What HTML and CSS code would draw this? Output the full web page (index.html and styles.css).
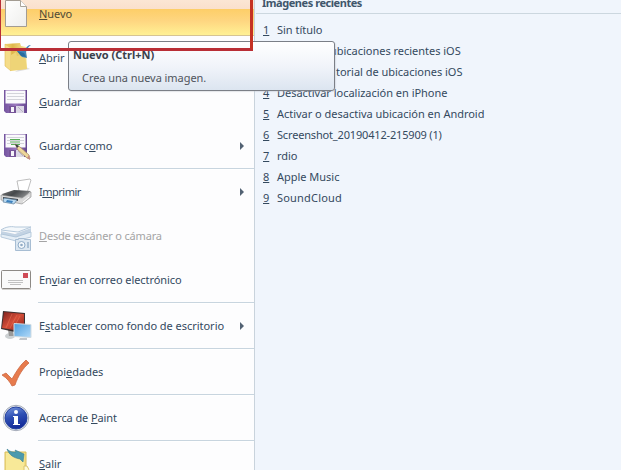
FILE: index.html
```html
<!DOCTYPE html>
<html lang="es">
<head>
<meta charset="utf-8">
<title>Paint</title>
<link rel="stylesheet" href="styles.css">
</head>
<body>
<div class="app">
<nav class="menu">
  <div class="item active">
    <svg class="icon" viewBox="0 0 32 44"><defs><linearGradient id="paper" x2="1" y2="1"><stop stop-color="#fff"/><stop offset="1" stop-color="#eeeeec"/></linearGradient></defs><path d="M5.500 8.500h15l6 6v20h-21z" fill="url(#paper)" stroke="#a39c92"/><path d="M20.500 8.500v6h6" fill="#fff" stroke="#aaa49a"/></svg>
    <span class="label"><u>N</u>uevo</span>
  </div>
  <div class="item">
    <svg class="icon" viewBox="0 0 32 44"><defs><linearGradient id="folder"><stop stop-color="#f3d777"/><stop offset=".35" stop-color="#dfb74b"/><stop offset="1" stop-color="#f8e69b"/></linearGradient></defs><path d="M24 30l6 3-15 3z" fill="#ddd"/><path d="M5 8l15-1 1 3 5 1 1 22-13 1-6-2z" fill="url(#folder)"/><path d="M5 8l6 4v23l-6-5z" fill="#f5dc88" stroke="#dfbd56" stroke-width=".6"/><path d="M11 19l5-3 1 4 8-1 2 14-16 2z" fill="#eed477"/><path d="M31 9c-3 0-5 2-6 5l-8 1 5 6 5 1-1-6c1-3 2-5 5-7z" fill="#4386b9"/><path d="M17 15l7 2 2 4-5-1z" fill="#286c9e"/></svg>
    <span class="label"><u>A</u>brir</span>
  </div>
  <div class="item">
    <svg class="icon" viewBox="0 0 32 44"><defs><linearGradient id="disk" x2="1"><stop stop-color="#74549f"/><stop offset=".5" stop-color="#9a78bd"/><stop offset="1" stop-color="#654790"/></linearGradient></defs><g id="floppy"><path d="M4 10h23v23h-21l-2-2z" fill="url(#disk)"/><path d="M5.500 10.500h20v13h-20z" fill="#fafafc"/><path d="M7 13.500h17m-17 3h17m-17 3h17" stroke="#d3d4da"/><path d="M9 26h15v7h-15z" fill="#dcd8e5"/><path d="M9 26h7v7h-7z" fill="#765498"/><path d="M11 27h3v5h-3z" fill="#f6f5fa"/><path d="M18 27l5 5" stroke="#b9b4c2"/></g></svg>
    <span class="label"><u>G</u>uardar</span>
  </div>
  <div class="item">
    <svg class="icon" viewBox="0 0 32 44"><use href="#floppy"/><path d="M10 15.500h10m-10 2.500h10m-9 2.500h9" stroke="#58ad58"/><path d="M15 20l3 6 9 8 3 1-1-4-9-8z" fill="#eed79a" stroke="#a58861" stroke-width=".7"/><path d="M15 20l2 4 2-2z" fill="#303741"/><path d="M27 34l3 2-1-5z" fill="#c88a84"/></svg>
    <span class="label save-as">Guardar c<u>o</u>mo</span><i class="arrow"></i>
  </div>
  <hr>
  <div class="item">
    <svg class="icon" viewBox="0 0 32 44"><defs><linearGradient id="printer" x2="1" y2=".4"><stop stop-color="#777"/><stop offset=".5" stop-color="#45484b"/><stop offset="1" stop-color="#8a8c8d"/></linearGradient></defs><path d="M17 11l13-2 1 1-4 13-8-2z" fill="#fff" stroke="#b5b5b5" stroke-width=".9"/><path d="M2 24l12-4 17 1-8 7-20-2z" fill="url(#printer)"/><path d="M1 25l21 3 9-6v5l-9 7-21-4z" fill="#dadada" stroke="#888" stroke-width=".6"/><path d="M3 27l15 2v2l-15-2z" fill="#404448"/><path d="M4 28l13 2-3 4-11-2z" fill="#b9d9f1" stroke="#597b98" stroke-width=".7"/><path d="M7 30l6 1-1 2-6-1z" fill="#3b80bd"/><path d="M23 32l6-5" stroke="#fff"/></svg>
    <span class="label print">I<u>m</u>primir</span><i class="arrow"></i>
  </div>
  <div class="item disabled">
    <svg class="icon" viewBox="0 0 32 44"><path d="M1 17l14 3 16-6v4l-15 7-15-4z" fill="#c3d3e3"/><path d="M1 16c4-3 10-4 14-3h16l-13 5z" fill="#f4f8fb" stroke="#b4c8db"/><path d="M1 20l15 3 15-5v5l-15 4-15-4z" fill="#e5eef6" stroke="#a9c0d5" stroke-width=".8"/><path d="M15.500 25.500h3v-1h6v1h6v11h-15z" fill="#dce7f1" stroke="#a7bdd3"/><circle cx="21.500" cy="31" r="3.500" fill="#f4f8fb" stroke="#8fabc7"/><circle cx="21.500" cy="31" r="1.300" fill="#91abc5"/><path d="M28 28v6" stroke="#a9bfd4" stroke-width="2"/></svg>
    <span class="label scan"><u>D</u>esde escáner o cámara</span>
  </div>
  <div class="item">
    <svg class="icon" viewBox="0 0 32 44"><rect x="1.500" y="12.500" width="29" height="18" rx="1" fill="#fafafa" stroke="#8d8985"/><path d="M2 31.500h29" stroke="#d4d2cf"/><path d="M8 22.500h15m-15 2h15m-13 2h11" stroke="#b3b3b3" stroke-width=".8"/><rect x="23" y="15" width="5" height="5" fill="#cf4a56"/></svg>
    <span class="label mail">En<u>v</u>iar en correo electrónico</span>
  </div>
  <hr>
  <div class="item">
    <svg class="icon" viewBox="0 0 32 44"><defs><linearGradient id="redscreen" x2="1" y2="1"><stop stop-color="#7c201c"/><stop offset=".5" stop-color="#d44d38"/><stop offset="1" stop-color="#8b211c"/></linearGradient><linearGradient id="bluescreen" x2="1" y2="1"><stop stop-color="#4b9ddd"/><stop offset="1" stop-color="#b1dafa"/></linearGradient></defs><ellipse cx="10" cy="32" rx="5" ry="3" fill="#ccd0d2"/><path d="M8 26h5l1 6h-5z" fill="#999"/><path d="M3 7l22 2v17l-10 2-14-3z" fill="#3b3030"/><path d="M4 8l20 2v14l-10 2-12-2z" fill="url(#redscreen)"/><path d="M6 24l6-14m-2 14l7-13m-3 12l6-11" stroke="#ed7959" stroke-width=".5"/><path d="M14 19.500l17 1v13l-17-1z" fill="url(#bluescreen)" stroke="#d1dbe1"/><path d="M20 34h7v2h-8z" fill="#c0c5ca"/></svg>
    <span class="label">E<u>s</u>tablecer como fondo de escritorio</span><i class="arrow"></i>
  </div>
  <hr>
  <div class="item">
    <svg class="icon" viewBox="0 0 32 44"><path d="M2 25l4-2 6 6c4-7 8-14 14-19l3 3c-6 5-11 13-14 22l-3 1c-2-4-5-8-10-11z" fill="#e77b4d" stroke="#cb6945" stroke-width=".8"/></svg>
    <span class="label">Propi<u>e</u>dades</span>
  </div>
  <hr>
  <div class="item">
    <svg class="icon" viewBox="0 0 32 44"><defs><linearGradient id="info" y2="1" x2=".3"><stop stop-color="#7b9be1"/><stop offset=".5" stop-color="#2f50b4"/><stop offset="1" stop-color="#142b9a"/></linearGradient></defs><circle cx="16" cy="22" r="12.700" fill="#e5e7eb" stroke="#929bab" stroke-width=".8"/><circle cx="16" cy="22" r="11" fill="url(#info)" stroke="#2542a0"/><circle cx="16" cy="16" r="2" fill="#fff"/><path d="M13 20h5v8h2v1h-7v-1h1v-7h-1z" fill="#fff"/></svg>
    <span class="label about">Acerca de <u>P</u>aint</span>
  </div>
  <hr>
  <div class="item">
    <svg class="icon" viewBox="0 0 32 44"><path d="M5 10h21v26h-21z" fill="#f3df83" stroke="#d9bd5c"/><path d="M6 11h18v24h-18z" fill="#f8e998"/><path d="M7 7c3 3 6 3 9 3l-1-2 9 4-1 8-3-3c-6-1-11-4-13-10z" fill="#4b9aae" stroke="#397d91" stroke-width=".6"/><path d="M24 24h3q3 3 1 7h-4z" fill="#fffbd7" stroke="#dac373"/></svg>
    <span class="label"><u>S</u>alir</span>
  </div>
</nav>
<main class="recent">
  <h2>Imágenes recientes</h2>
  <ol>
    <li><u>1</u><span>Sin título</span></li>
    <li><u>2</u><span class="second">ubicaciones recientes iOS</span></li>
    <li><u>3</u><span class="third">torial de ubicaciones iOS</span></li>
    <li><u>4</u><span>Desactivar localización en iPhone</span></li>
    <li><u>5</u><span>Activar o desactiva ubicación en Android</span></li>
    <li><u>6</u><span class="file">Screenshot_20190412-215909 (1)</span></li>
    <li><u>7</u><span>rdio</span></li>
    <li><u>8</u><span>Apple Music</span></li>
    <li><u>9</u><span class="cloud">SoundCloud</span></li>
  </ol>
</main>
<div class="tooltip"><b>Nuevo (Ctrl+N)</b><p>Crea una nueva imagen.</p></div>
<div class="frame"></div>
</div>
</body>
</html>
```
FILE: styles.css
```css
* { box-sizing: border-box; }
body { margin: 0; overflow: hidden; font: 11px/16px "Noto Sans", "Open Sans", sans-serif; color: #34495e; }
.app { position: relative; display: flex; width: 621px; height: 470px; overflow: hidden; background: #f0f5fc; }
.menu { flex: none; width: 255px; height: 494px; margin-top: -8px; background: #fdfdfe; border-right: 1px solid #c9d3dc; }
.item { height: 44px; display: flex; align-items: center; padding-right: 10px; }
.icon { width: 32px; height: 44px; margin-right: 7px; flex: none; }
.label { flex: 1; white-space: nowrap; letter-spacing: -.03px; }
.save-as { letter-spacing: -.1px; }
.print { letter-spacing: -.5px; }
.scan { letter-spacing: -.17px; }
.mail { letter-spacing: -.06px; }
.about { letter-spacing: -.1px; }
u { text-decoration: underline; text-decoration-thickness: 1px; text-underline-offset: 1px; text-decoration-skip-ink: none; }
.active { background: linear-gradient(#fcebdc 0, #fae0cc 17px, #fdce68 17px, #fed681 29px, #fff194 43px); border-bottom: 1px solid #d6c493; color: #514b35; }
.disabled { color: #a4a4a5; }
hr { height: 2px; margin: 0 0 0 38px; border: 0; border-top: 1px solid #c8d5df; background: #fff; }
.arrow { width: 0; height: 0; border: 4px solid transparent; border-left-color: #526273; border-right: 0; }
.recent { flex: 1; min-width: 0; }
h2 { height: 14px; margin: 0 0 0 1px; padding-left: 6px; display: flex; align-items: flex-end; line-height: 20px; font-size: 11px; letter-spacing: -.45px; border-bottom: 1px solid #ccd7df; color: #40566b; }
ol { margin: 5px 0 0; padding: 0 0 0 8px; list-style: none; }
li { height: 21px; display: flex; align-items: center; white-space: nowrap; }
li span { letter-spacing: -.02px; }
li u { width: 14px; flex: none; }
.second { margin-left: 53px; }
.third { margin-left: 59px; }
.file { letter-spacing: -.17px; }
.cloud { letter-spacing: .2px; }
.tooltip { position: absolute; left: 68px; top: 41px; width: 267px; height: 50px; padding: 5px 4px; border: 1px solid #7b7f87; border-radius: 3px; background: linear-gradient(#fff, #f1f4fa 50%, #dce5f0); color: #50545c; box-shadow: 1px 1px 1px #bdc3cb66; }
.tooltip b { display: block; color: #3b414c; }
.tooltip p { margin: 7px 0 0 9px; letter-spacing: -.05px; }
.frame { position: absolute; top: -4px; left: -1px; width: 254px; height: 55px; border: 3px solid #b92e36; border-left-width: 2px; border-right-color: #c53224; }
```
